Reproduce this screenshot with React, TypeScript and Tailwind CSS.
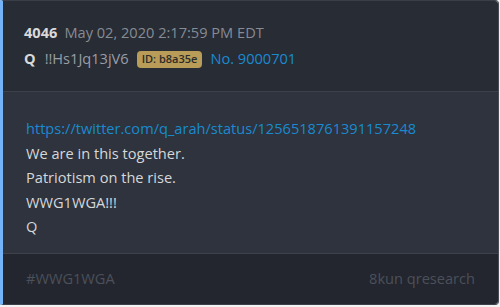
import React from 'react';

const App: React.FC = () => {
    return (
        <div className="w-[500px] h-[307px] bg-[#f2f2f2] font-['Open_Sans',sans-serif]">
            <div className="w-[499px] h-[305px] flex flex-col overflow-hidden rounded-r-[4px] border-l-[3px] border-l-[#74b3f8] border-t border-t-[#3a3f49] border-r border-r-[#474c56] border-b border-b-[#3a3f49]">
                {/* Header */}
                <div className="h-[91px] shrink-0 bg-[#282c35] border-b border-[#3c414b] px-[21px] pt-[22px]">
                    <div className="flex items-center gap-[7px] h-[20px] text-[14.6px]">
                        <span className="font-bold text-[#d8d9db]">4046</span>
                        <span className="text-[#868b94]">May 02, 2020 2:17:59 PM EDT</span>
                    </div>
                    <div className="flex items-center h-[20px] mt-[6px] text-[14.6px]">
                        <span className="font-bold text-[#d8d9db]">Q</span>
                        <span className="ml-[9px] text-[#999ea6]">!!Hs1Jq13jV6</span>
                        <span className="ml-[8px] rounded-[4px] bg-[#b89c57] px-[5px] h-[17px] flex items-center text-[11px] font-semibold text-[#2b2b2b]">ID: b8a35e</span>
                        <span className="ml-[8px] text-[#1a8ad0]">No. 9000701</span>
                    </div>
                </div>

                {/* Body */}
                <div className="h-[162px] shrink-0 bg-[#2e333d] border-b border-[#3c414b] px-[23px] pt-[24px] text-[14.6px] leading-[24.5px] text-[#d6d7d9]">
                    <div className="text-[#1a8ad0]">https://twitter.com/q_arah/status/1256518761391157248</div>
                    <div>We are in this together.</div>
                    <div>Patriotism on the rise.</div>
                    <div>WWG1WGA!!!</div>
                    <div>Q</div>
                </div>

                {/* Footer */}
                <div className="flex-1 bg-[#23262e] px-[23px] flex items-center justify-between text-[14.6px] text-[#4b505a]">
                    <span>#WWG1WGA</span>
                    <span>8kun qresearch</span>
                </div>
            </div>
        </div>
    );
};

export default App;
